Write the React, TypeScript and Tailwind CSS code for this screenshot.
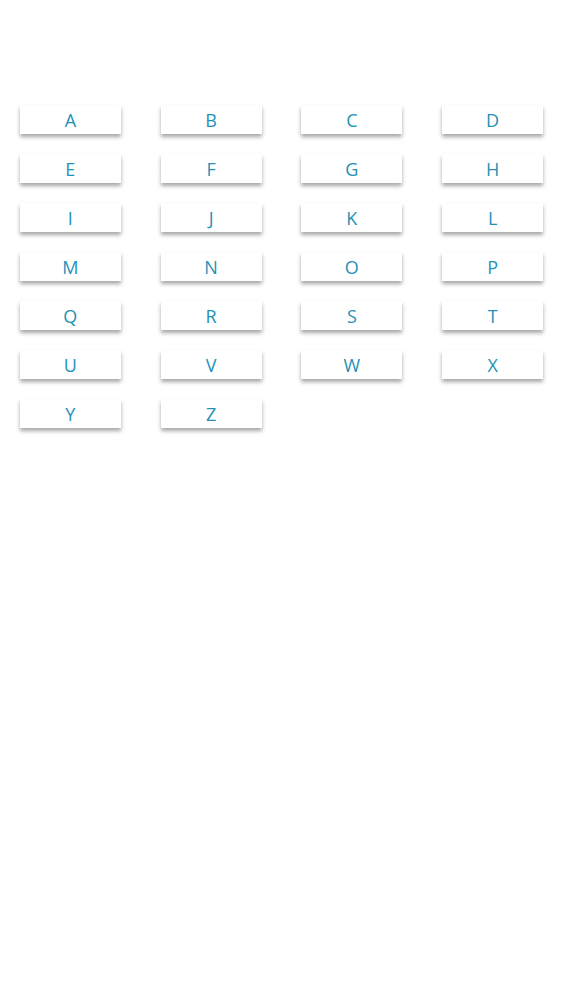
const LETTERS = "ABCDEFGHIJKLMNOPQRSTUVWXYZ".split("");

export default function App() {
  return (
    <div className="min-h-screen bg-white pt-[105px] font-['Open_Sans',sans-serif]">
      <div className="grid grid-cols-4 gap-y-[20px]">
        {LETTERS.map((letter) => (
          <div key={letter} className="flex justify-center">
            <button
              type="button"
              className="flex h-[29px] w-[101px] items-center justify-center bg-white text-[18px] leading-none text-[#2591b6] shadow-[0_3px_4px_rgba(0,0,0,0.35)]"
            >
              {letter}
            </button>
          </div>
        ))}
      </div>
    </div>
  );
}
